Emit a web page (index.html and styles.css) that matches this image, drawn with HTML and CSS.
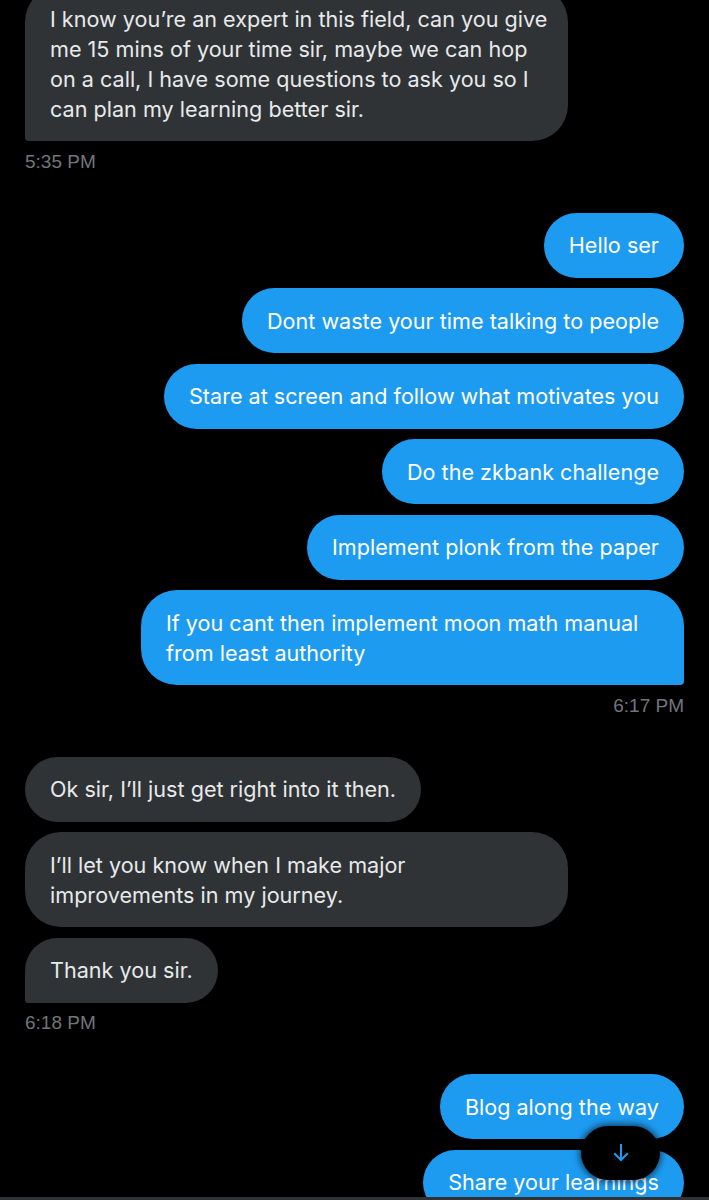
FILE: index.html
```html
<!DOCTYPE html>
<html lang="en">
<head>
<meta charset="utf-8">
<title>Messages</title>
<link rel="stylesheet" href="styles.css">
</head>
<body>
<main class="chat">
  <section class="group in first">
    <div class="bubble gray wide tail-left">I know you’re an expert in this field, can you give<br>me 15 mins of your time sir, maybe we can hop<br>on a call, I have some questions to ask you so I<br>can plan my learning better sir.</div>
    <div class="time">5:35 PM</div>
  </section>

  <section class="group out">
    <div class="bubble blue">Hello ser</div>
    <div class="bubble blue">Dont waste your time talking to people</div>
    <div class="bubble blue">Stare at screen and follow what motivates you</div>
    <div class="bubble blue">Do the zkbank challenge</div>
    <div class="bubble blue">Implement plonk from the paper</div>
    <div class="bubble blue wide tail-right">If you cant then implement moon math manual<br>from least authority</div>
    <div class="time">6:17 PM</div>
  </section>

  <section class="group in">
    <div class="bubble gray">Ok sir, I’ll just get right into it then.</div>
    <div class="bubble gray wide">I’ll let you know when I make major<br>improvements in my journey.</div>
    <div class="bubble gray tail-left">Thank you sir.</div>
    <div class="time">6:18 PM</div>
  </section>

  <section class="group out">
    <div class="bubble blue">Blog along the way</div>
    <div class="bubble blue">Share your learnings</div>
  </section>
</main>

<button class="scroll-down" aria-label="Scroll to bottom">
  <svg viewBox="0 0 24 24" width="24" height="24" aria-hidden="true">
    <path d="M13 3v13.59l5.043-5.05 1.414 1.42L12 20.41l-7.457-7.45 1.414-1.42L11 16.59V3h2z"></path>
  </svg>
</button>
<div class="composer-edge"></div>
</body>
</html>
```

FILE: styles.css
```css
html, body {
  margin: 0;
  padding: 0;
  background: #000;
}

body {
  font-family: Inter, "Liberation Sans", Arial, sans-serif;
  color: #e7e9ea;
  overflow: hidden;
  height: 1200px;
}

.chat {
  display: flex;
  flex-direction: column;
  padding: 0 25px;
}

.group {
  display: flex;
  flex-direction: column;
  gap: 10.5px;
  margin-top: 40px;
}

.group.first {
  margin-top: -14px;
}

.group.in {
  align-items: flex-start;
}

.group.out {
  align-items: flex-end;
}

.bubble {
  box-sizing: border-box;
  max-width: 544px;
  padding: 17.5px 25px;
  border-radius: 36px;
  font-size: 21.6px;
  line-height: 30px;
  white-space: nowrap;
}

.bubble.wide {
  width: 543px;
}

.bubble.gray {
  background: #2f3336;
  color: #e7e9ea;
}

.bubble.blue {
  background: #1d9bf0;
  color: #ffffff;
}

.bubble.tail-left {
  border-bottom-left-radius: 4px;
}

.bubble.tail-right {
  border-bottom-right-radius: 4px;
}

.time {
  margin-top: -1px;
  font-family: "Liberation Sans", Arial, sans-serif;
  font-size: 19px;
  line-height: 22px;
  color: #71767b;
}

.scroll-down {
  position: fixed;
  right: 49px;
  bottom: 20px;
  width: 79px;
  height: 54px;
  border: 0;
  border-radius: 27px;
  background: #000;
  box-shadow: 0 0 6px 2px rgba(0, 0, 0, 0.55);
  display: flex;
  align-items: center;
  justify-content: center;
  padding: 0;
}

.scroll-down svg {
  fill: #1d9bf0;
}

.composer-edge {
  position: fixed;
  left: 0;
  right: 0;
  bottom: 0;
  height: 3px;
  background: #2f3336;
}
```
